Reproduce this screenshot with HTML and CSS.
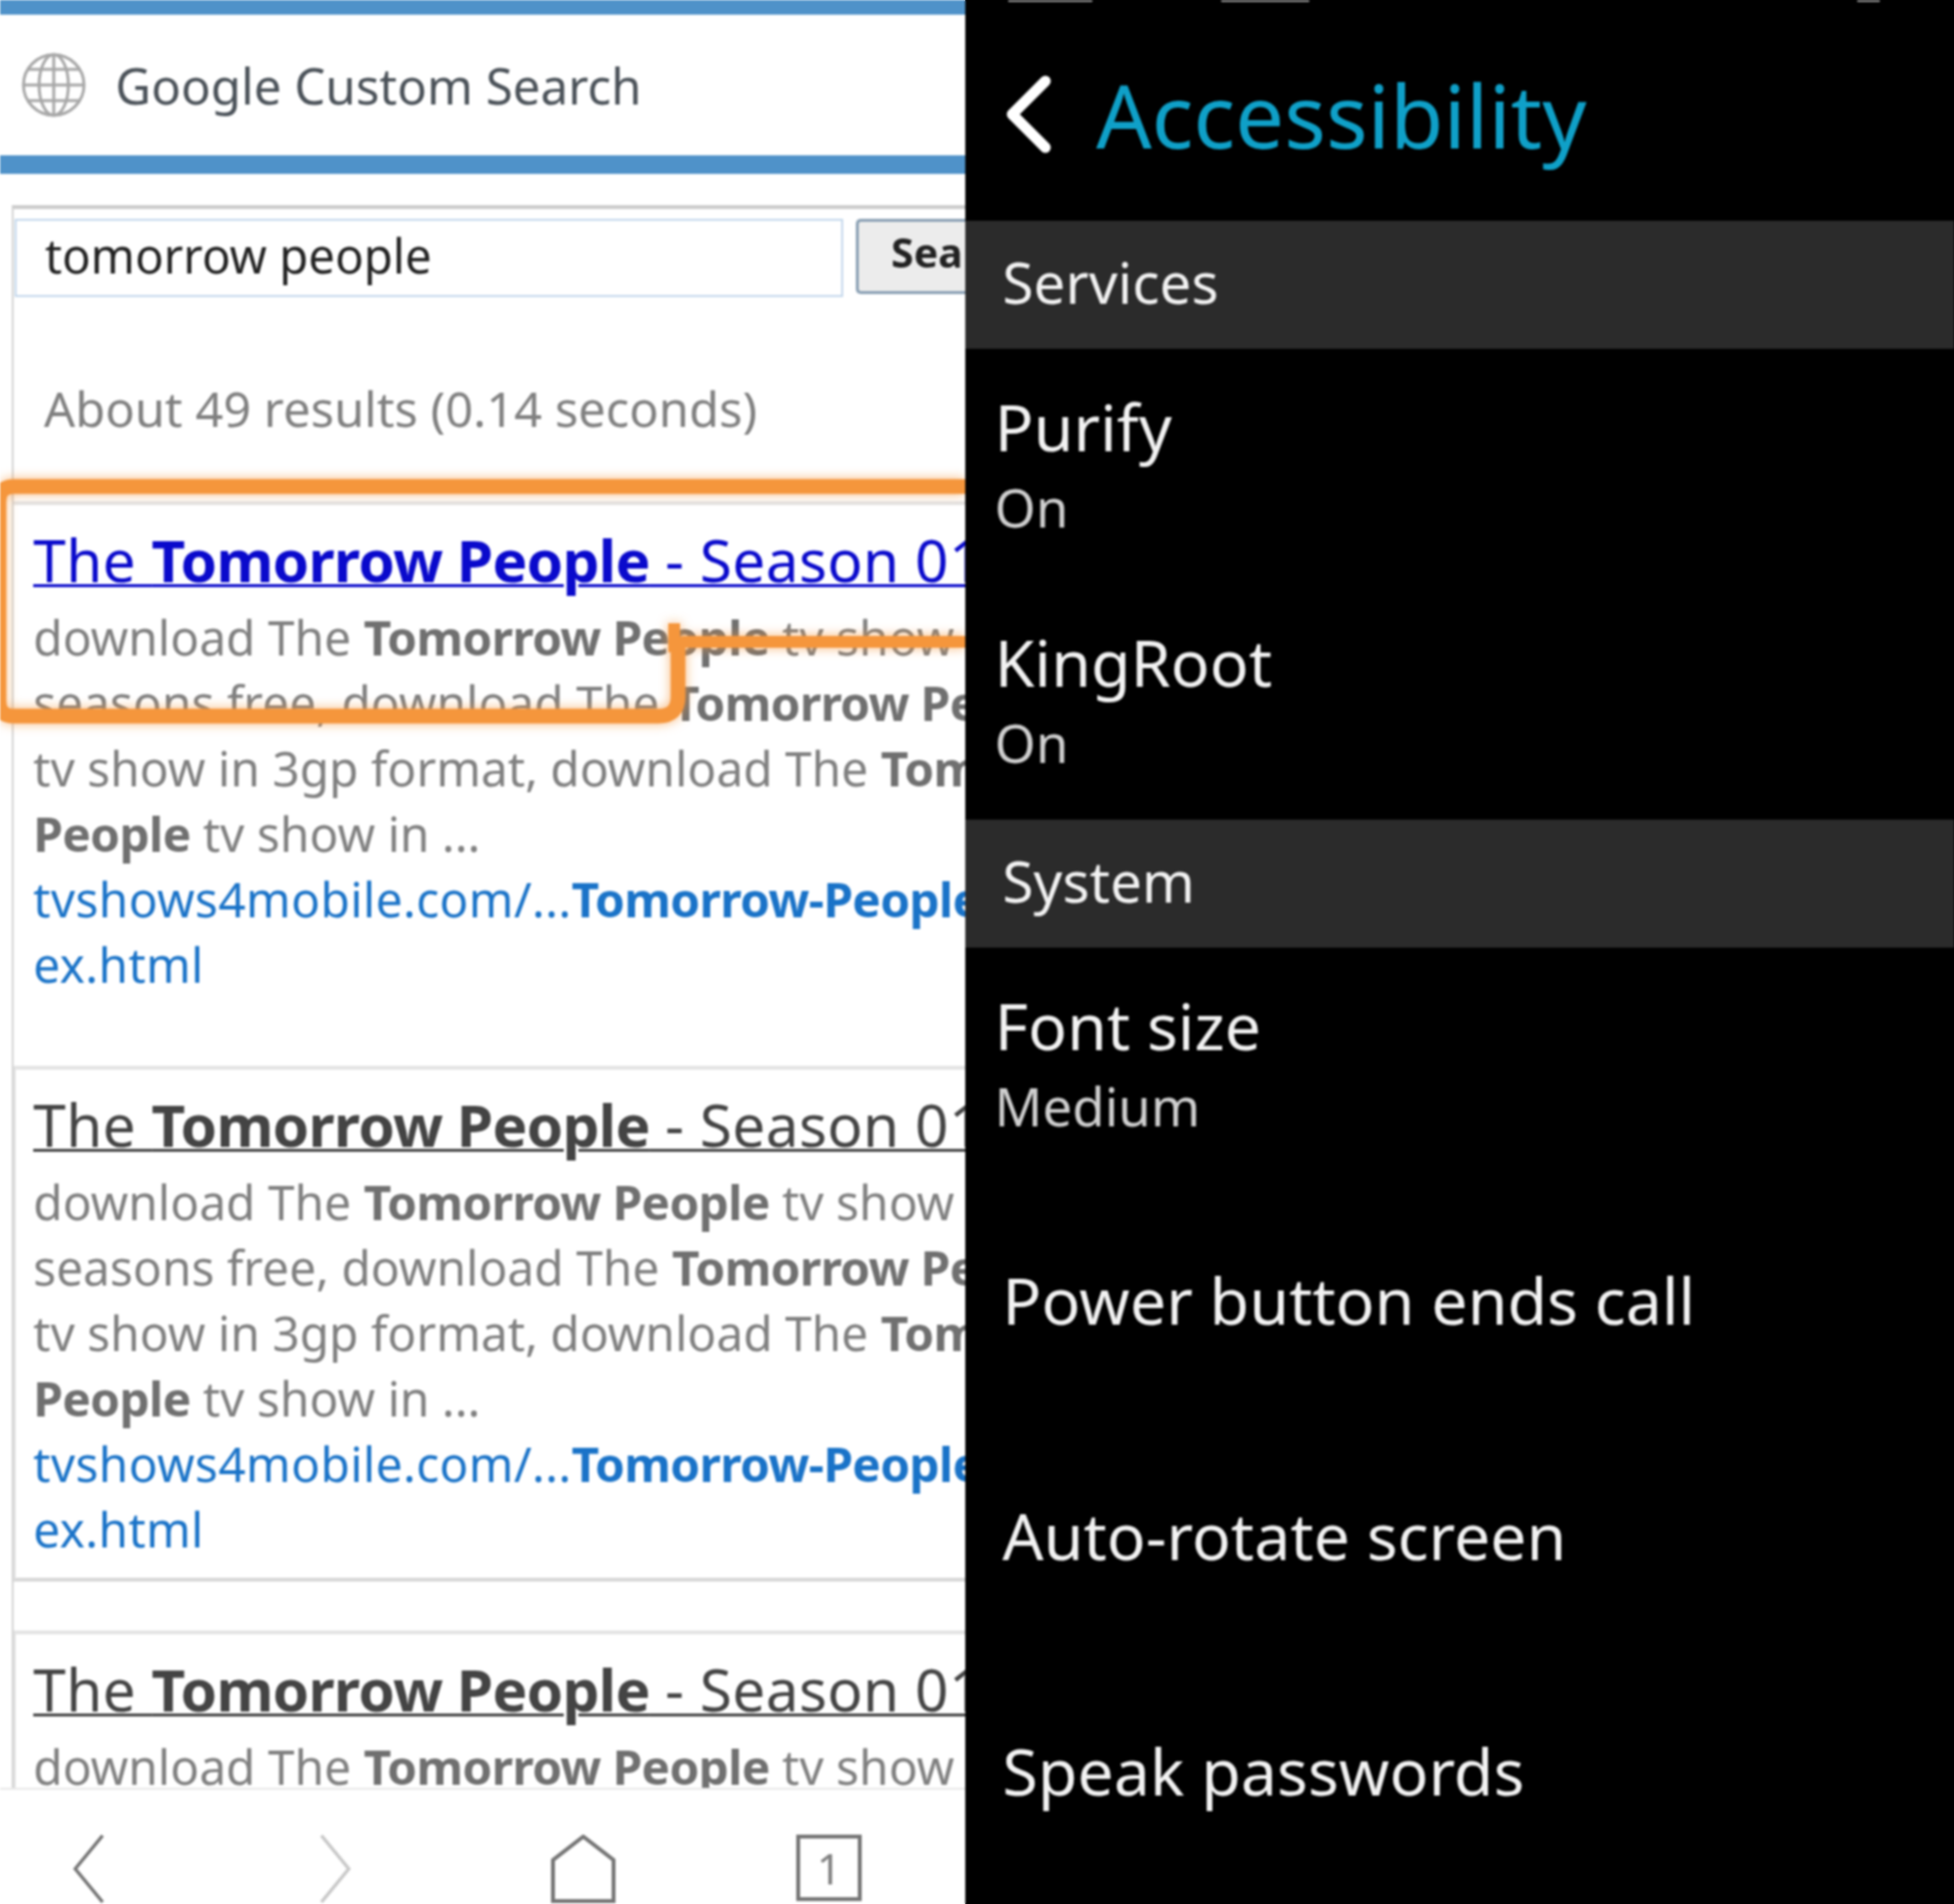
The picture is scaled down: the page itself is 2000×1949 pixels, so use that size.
FILE: index.html
```html
<!DOCTYPE html>
<html lang="en">
<head>
<meta charset="UTF-8">
<title>Accessibility</title>
<link rel="stylesheet" href="styles.css">
</head>
<body>
<div class="screen">
    <div class="browser">
        <div class="site-bar">
            <svg class="globe" viewBox="0 0 66 66" fill="none" stroke="#a8a8a8" stroke-width="3">
                <circle cx="33" cy="33" r="31"/>
                <ellipse cx="33" cy="33" rx="15" ry="31"/>
                <path d="M33 2V64M2 33H64M7 17H59M7 49H59"/>
            </svg>
            <span>Google Custom Search</span>
        </div>
        <div class="page">
            <div class="search-row">
                <div class="search-input">tomorrow people</div>
                <div class="search-button">Search</div>
            </div>
            <div class="result-count">About 49 results (0.14 seconds)</div>

            <div class="result result-active">
                <div class="result-title">The <b>Tomorrow People</b> - Season 01</div>
                <div class="result-text">download The <b>Tomorrow People</b> tv show all</div>
                <div class="result-text">seasons free, download The <b>Tomorrow People</b></div>
                <div class="result-text">tv show in 3gp format, download The <b>Tomorrow</b></div>
                <div class="result-text"><b>People</b> tv show in ...</div>
                <div class="result-url">tvshows4mobile.com/...<b>Tomorrow-People</b></div>
                <div class="result-url">ex.html</div>
            </div>

            <div class="result">
                <div class="result-title">The <b>Tomorrow People</b> - Season 01</div>
                <div class="result-text">download The <b>Tomorrow People</b> tv show all</div>
                <div class="result-text">seasons free, download The <b>Tomorrow People</b></div>
                <div class="result-text">tv show in 3gp format, download The <b>Tomorrow</b></div>
                <div class="result-text"><b>People</b> tv show in ...</div>
                <div class="result-url">tvshows4mobile.com/...<b>Tomorrow-People</b></div>
                <div class="result-url">ex.html</div>
            </div>

            <div class="result">
                <div class="result-title">The <b>Tomorrow People</b> - Season 01</div>
                <div class="result-text">download The <b>Tomorrow People</b> tv show all</div>
            </div>
        </div>
        <div class="toolbar">
            <svg class="tool-back" viewBox="0 0 32 70" fill="none" stroke="#757575" stroke-width="3.5"><path d="M30 1L2 35L30 69"/></svg>
            <svg class="tool-forward" viewBox="0 0 32 70" fill="none" stroke="#c8c8c8" stroke-width="3.5"><path d="M2 1L30 35L2 69"/></svg>
            <svg class="tool-home" viewBox="0 0 66 70" fill="none" stroke="#757575" stroke-width="4"><path d="M2 68V26L33 2L64 26V68Z"/></svg>
            <div class="tab-count">1</div>
        </div>

        <svg class="callout" viewBox="0 0 988 270" fill="none" stroke="#f5963c">
            <path d="M988 10H14Q-1 10 -1 25V230Q-1 245 14 245H674Q694 245 694 225V166" stroke-width="15"/>
            <path d="M690 150V172L700 169H988" stroke-width="12"/>
        </svg>
    </div>

    <div class="settings">
        <div class="status-bar"><i class="status-a"></i><i class="status-b"></i><i class="status-c"></i></div>
        <div class="settings-head">
            <svg class="back-icon" viewBox="0 0 48 80" fill="none" stroke="#fff" stroke-width="11" stroke-linecap="round" stroke-linejoin="round"><path d="M42 6L8 40L42 74"/></svg>
            <h1>Accessibility</h1>
        </div>
        <div class="group-label">Services</div>
        <div class="item">
            <div class="item-name">Purify</div>
            <div class="item-value">On</div>
        </div>
        <div class="item">
            <div class="item-name">KingRoot</div>
            <div class="item-value">On</div>
        </div>
        <div class="group-label">System</div>
        <div class="item">
            <div class="item-name">Font size</div>
            <div class="item-value">Medium</div>
        </div>
        <div class="item item-single">Power button ends call</div>
        <div class="item item-single">Auto-rotate screen</div>
        <div class="item item-single">Speak passwords</div>
    </div>
</div>
</body>
</html>
```

FILE: styles.css
```css
/* white under the left half, black under the right, so the blur has no dark rim */
html, body {
    margin: 0;
    height: 100%;
    background: linear-gradient(90deg, #fff 988px, #000 988px);
}

.screen {
    display: flex;
    width: 2000px;
    height: 1949px;
    overflow: hidden;
    font-family: "Noto Sans", "Open Sans", sans-serif;
    filter: blur(1px);
}

/* left half, browser */
.browser {
    position: relative;
    display: flex;
    flex-direction: column;
    width: 988px;
    flex-shrink: 0;
    overflow: hidden;
    background-color: #fff;
}

.site-bar {
    display: flex;
    align-items: center;
    gap: 30px;
    height: 144px;
    padding-left: 22px;
    border-top: 15px solid #4f92c9;
    border-bottom: 19px solid #4f92c9;
    font-size: 50.4px;
    color: #4b5259;
}

.globe {
    width: 66px;
    height: 66px;
}

.page {
    flex: 1;
    min-height: 0;
    overflow: hidden;
    margin: 32px 0 0 12px;
    border-left: 2px solid #d4d4d4;
    border-top: 4px solid #ccc;
    white-space: nowrap;
}

.search-row {
    display: flex;
    gap: 13px;
    margin-top: 10px;
}

.search-input {
    width: 848px;
    height: 80px;
    flex-shrink: 0;
    padding-left: 29px;
    box-sizing: border-box;
    margin-left: 1px;
    border: 2px solid #c4d8ec;
    font-size: 48.5px;
    line-height: 70px;
    color: #222;
}

.search-button {
    width: 160px;
    height: 77px;
    flex-shrink: 0;
    box-sizing: border-box;
    padding-left: 33px;
    border: 3px solid #8aa0b4;
    border-right: none;
    border-radius: 5px;
    background-color: #ececec;
    font-size: 42px;
    line-height: 62px;
    font-weight: bold;
    color: #222;
}

.result-count {
    margin: 81px 0 0 31px;
    font-size: 50px;
    line-height: 66px;
    color: #808080;
}

.result {
    margin-top: 50px;
    height: 502px;
    padding: 18px 0 0 18px;
    border-top: 4px solid #e4e4e4;
    border-bottom: 4px solid #d8d8d8;
    border-left: 2px solid #e0e0e0;
}

.result-active {
    margin-top: 62px;
    height: 506px;
    padding-left: 20px;
    border-bottom: none;
    border-left: none;
}

.result-title {
    font-size: 60px;
    line-height: 76px;
    letter-spacing: 0.3px;
    color: #444;
    text-decoration: underline;
    text-decoration-thickness: 3px;
    margin-bottom: 8px;
}

.result-title b {
    letter-spacing: -0.8px;
}

.result-active .result-title {
    color: #0a0acc;
}

.result-text {
    font-size: 49px;
    line-height: 67px;
    color: #808080;
}

.result-text b {
    color: #707070;
    letter-spacing: -0.7px;
}

.result-url {
    font-size: 49px;
    line-height: 67px;
    letter-spacing: 0.35px;
    color: #1a73c8;
}

.result-url b {
    letter-spacing: -0.7px;
}

/* bottom toolbar */
.toolbar {
    display: flex;
    height: 119px;
    flex-shrink: 0;
    padding-top: 46px;
    box-sizing: border-box;
    border-top: 2px solid #e8e8e8;
    background-color: #fff;
}

.tool-back,
.tool-forward {
    width: 32px;
    height: 70px;
    flex-shrink: 0;
}

.tool-back {
    margin-left: 75px;
}

.tool-forward {
    margin-left: 220px;
}

.tool-home {
    width: 66px;
    height: 70px;
    flex-shrink: 0;
    margin-left: 205px;
}

.tab-count {
    width: 67px;
    height: 68px;
    flex-shrink: 0;
    margin-left: 185px;
    border: 4px solid #757575;
    box-sizing: border-box;
    text-align: center;
    font-size: 44px;
    line-height: 60px;
    color: #808080;
}

.callout {
    position: absolute;
    left: 0;
    top: 488px;
    width: 988px;
    height: 270px;
    filter: drop-shadow(0 0 6px rgba(245, 150, 60, 0.7));
}

/* right half, settings */
.settings {
    position: relative;
    flex: 1;
    background-color: #000;
    color: #f2f2f2;
    white-space: nowrap;
}

.status-bar i {
    position: absolute;
    top: 0;
    height: 2px;
    background-color: #999;
}

.status-a { left: 44px; width: 86px; }
.status-b { left: 262px; width: 90px; }
.status-c { left: 913px; width: 23px; }

.settings-head {
    display: flex;
    align-items: center;
    gap: 46px;
    height: 226px;
    padding: 8px 0 0 40px;
    box-sizing: border-box;
}

.back-icon {
    width: 48px;
    height: 80px;
}

h1 {
    margin: 0;
    font-size: 89px;
    font-weight: normal;
    color: #0fa0c8;
}

.group-label {
    height: 131px;
    padding-left: 38px;
    background-color: #2b2b2b;
    font-size: 58px;
    line-height: 126px;
}

.item {
    height: 241px;
    padding-left: 30px;
    box-sizing: border-box;
}

.item-name {
    padding-top: 37px;
    font-size: 66px;
    line-height: 84px;
}

.item-value {
    padding-top: 5px;
    font-size: 54px;
    line-height: 72px;
    color: #cfcfcf;
}

.item-single {
    padding: 77px 0 0 38px;
    font-size: 66px;
    line-height: 84px;
}
```
